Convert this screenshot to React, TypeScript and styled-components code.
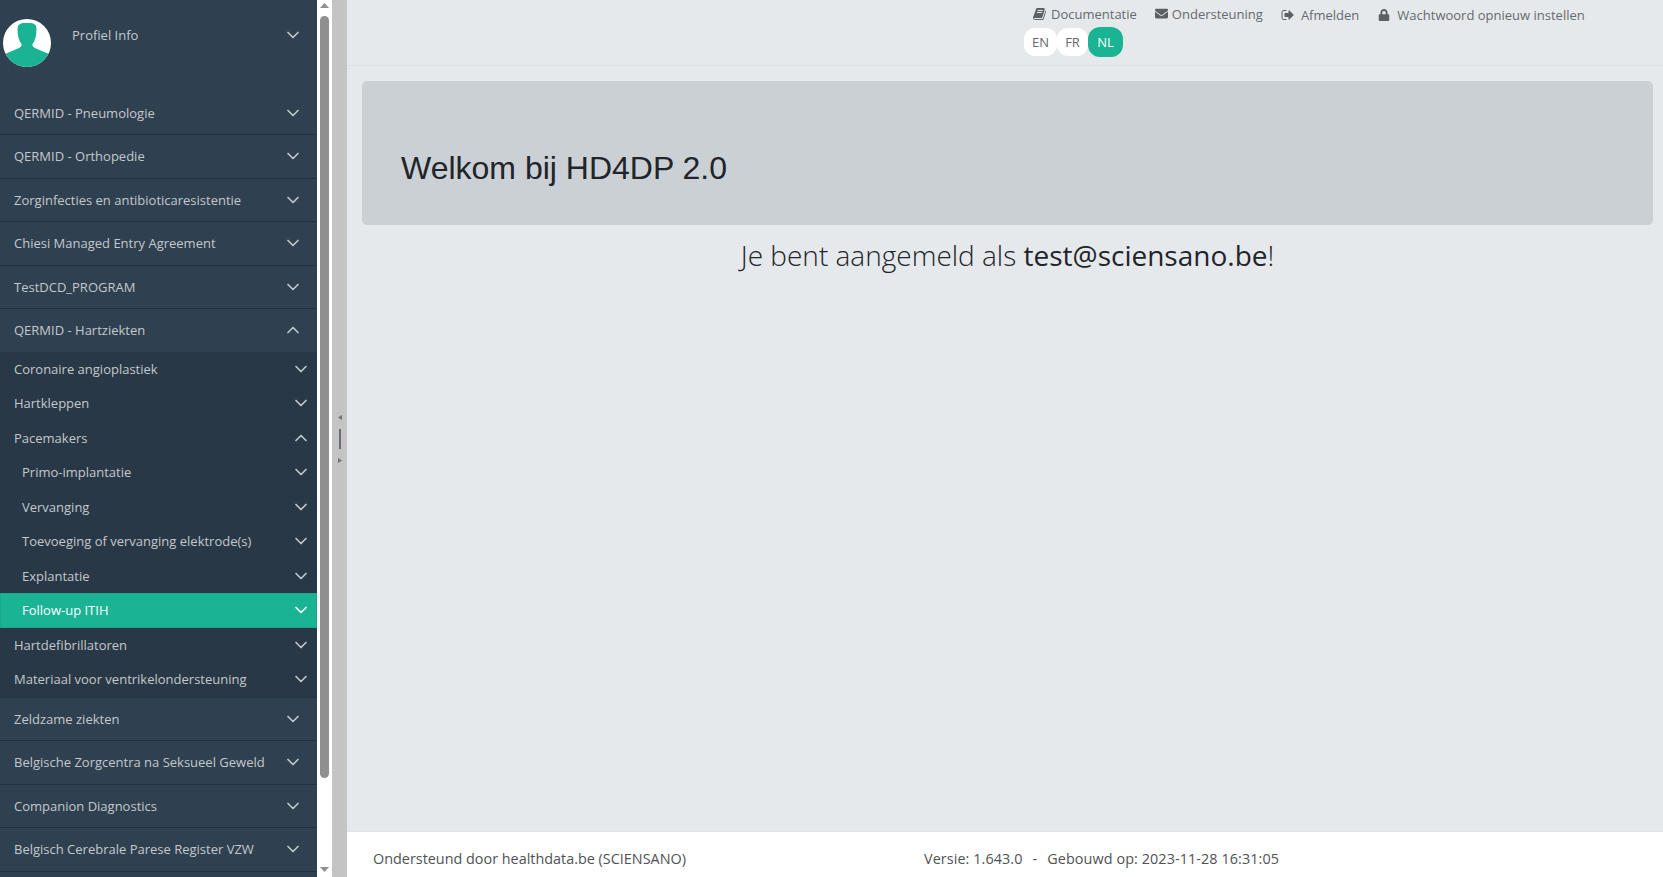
import React from "react";
import styled, { createGlobalStyle } from "styled-components";
import { FaEnvelope, FaLock } from "react-icons/fa";
import { FiChevronDown, FiChevronUp } from "react-icons/fi";

const Global = createGlobalStyle`
  html, body { margin: 0; padding: 0; height: 100%; overflow: hidden; }
  body { font-family: "Open Sans", "Liberation Sans", sans-serif; background: #e5e9ec; }
  * { box-sizing: border-box; }
`;

const Page = styled.div`
  display: flex;
  height: 877px;
  width: 1663px;
  overflow: hidden;
`;

const Sidebar = styled.nav`
  width: 317px;
  flex: none;
  background: #2f4050;
  overflow: hidden;
  color: #c3c8cc;
  font-size: 13px;
`;

const Profile = styled.div`
  height: 91.5px;
  display: flex;
  align-items: flex-start;
  padding: 19px 14px 0 3px;
`;

const Avatar = styled.svg`
  width: 48px;
  height: 48px;
  flex: none;
  border-radius: 50%;
`;

const ProfileLabel = styled.span`
  margin-left: 21px;
  line-height: 32px;
  flex: 1;
`;

const ChevronSlot = styled.span`
  display: flex;
  margin-top: 6px;
`;

const Row = styled.div<{ $height: number; $indent: number; $active?: boolean; $border?: boolean; $right: number }>`
  height: ${(p) => p.$height}px;
  display: flex;
  align-items: center;
  justify-content: space-between;
  padding: 0 ${(p) => p.$right}px 0 ${(p) => p.$indent}px;
  color: ${(p) => (p.$active ? "#ffffff" : "#c3c8cc")};
  background: ${(p) => (p.$active ? "#1ab394" : "transparent")};
  box-shadow: ${(p) => (p.$active ? "inset 0 0 0 1px #18a98b" : "none")};
  border-bottom: ${(p) => (p.$border ? "1px solid #243240" : "none")};
`;

const SubMenu = styled.div`
  background: #293846;
  border-bottom: 1px solid #263340;
`;

const Scrollbar = styled.div`
  width: 15px;
  flex: none;
  background: #ffffff;
  display: flex;
  flex-direction: column;
  align-items: center;
  padding: 3px 3px 5px;
`;

const ScrollArrow = styled.svg`
  width: 9px;
  height: 5px;
  flex: none;
  fill: #8f8f8f;
`;

const ScrollThumb = styled.div`
  width: 9px;
  height: 762px;
  margin-top: 8px;
  background: #8f8f8f;
  border-radius: 5px;
`;

const ScrollSpace = styled.div`
  flex: 1;
`;

const Resizer = styled.div`
  width: 15px;
  flex: none;
  background: #c4c4c4;
  display: flex;
  flex-direction: column;
  align-items: center;
  justify-content: center;
  gap: 9px;
`;

const ResizerHandle = styled.div`
  width: 2px;
  height: 20px;
  background: #666e75;
`;

const Nub = styled.svg`
  width: 4px;
  height: 5px;
  fill: #77736e;
`;

const Main = styled.main`
  flex: 1;
  min-width: 0;
  display: flex;
  flex-direction: column;
`;

const TopBar = styled.header`
  height: 66px;
  flex: none;
  border-bottom: 1px solid #dee2e5;
  display: flex;
  flex-direction: column;
  align-items: flex-start;
  padding-left: 677px;
`;

const Links = styled.div`
  display: flex;
  align-items: center;
  height: 27px;
  padding-left: 9px;
  font-size: 13px;
  color: #676a6c;
  white-space: nowrap;
`;

const TopLink = styled.span<{ $gap: number; $after: number; $low?: boolean }>`
  display: inline-flex;
  align-items: center;
  gap: ${(p) => p.$gap}px;
  margin-right: ${(p) => p.$after}px;
  margin-top: ${(p) => (p.$low ? 2 : 0)}px;
  svg { flex: none; color: #5c6063; }
`;

const Langs = styled.div`
  display: flex;
  align-items: center;
`;

const Lang = styled.span<{ $on?: boolean; $w: number }>`
  width: ${(p) => p.$w}px;
  height: ${(p) => (p.$on ? 30 : 28)}px;
  border-radius: ${(p) => (p.$on ? 12 : 11)}px;
  display: flex;
  align-items: center;
  justify-content: center;
  font-size: 13px;
  background: ${(p) => (p.$on ? "#1ab394" : "#ffffff")};
  color: ${(p) => (p.$on ? "#ffffff" : "#676a6c")};
`;

const Content = styled.section`
  flex: 1;
  padding: 15px 10px 0 15px;
  min-height: 0;
`;

const Jumbotron = styled.div`
  height: 144px;
  background: #cbd0d4;
  border-radius: 5px;
  padding: 0 39px;
  display: flex;
  align-items: center;
`;

const Title = styled.h1`
  margin: 0;
  padding-top: 30px;
  font: 400 32px "Liberation Sans", Arial, sans-serif;
  color: #212529;
`;

const Greeting = styled.p`
  margin: 12px 0 0;
  text-align: center;
  font-family: "Open Sans", sans-serif;
  font-weight: 300;
  font-size: 28px;
  line-height: 36px;
  color: #212529;
`;

const Email = styled.span`
  font-weight: 400;
`;

const Footer = styled.footer`
  height: 46px;
  flex: none;
  background: #ffffff;
  border-top: 1px solid #e0e3e6;
  display: flex;
  align-items: center;
  font-size: 14.4px;
  color: #4f5356;
  padding: 8px 0 0 26px;
`;

const FooterLeft = styled.span`
  width: 551px;
`;

const FooterRight = styled.span`
  letter-spacing: 0.08px;
`;

const FooterDash = styled.span`
  padding: 0 10px;
`;

const BookIcon = () => (
  <svg width="14" height="14" viewBox="0 0 1792 1792" fill="#5c6063">
    <path d="M1639 478q40 57 18 129l-275 906q-19 64-76.500 107.500t-122.500 43.500h-923q-77 0-148.500-53.500t-99.500-131.500q-24-67-2-127 0-4 3-27t4-37q1-8-3-21.500t-3-19.500q2-11 8-21t16.500-23.500 16.500-23.500q23-38 45-91.500t30-91.500q3-10 .5-30t-.5-28q3-11 17-28t17-23q21-36 42-92t25-90q1-9-2.500-32t.5-28q4-13 22-30.500t22-22.500q19-26 42.500-84.500t27.500-96.500q1-8-3-25.500t-2-26.500q2-8 9-18t18-23 17-21q8-12 16.500-30.500t15-35 16-36 19.500-32 26.500-23.500 36-11.500 47.500 5.500l-1 3q38-9 51-9h761q74 0 114 56t18 130l-274 906q-36 119-71.500 153.500t-128.500 34.500h-869q-27 0-38 15-11 16-1 43 24 70 144 70h923q29 0 56-15.500t35-41.500l300-987q7-22 5-57 38 15 59 43zm-1064 2q-4 13 2 22.500t20 9.500h608q13 0 25.500-9.500t16.500-22.500l21-64q4-13-2-22.500t-20-9.500h-608q-13 0-25.500 9.500t-16.500 22.500zm-83 256q-4 13 2 22.500t20 9.500h608q13 0 25.500-9.500t16.500-22.500l21-64q4-13-2-22.500t-20-9.500h-608q-13 0-25.500 9.500t-16.500 22.500z" />
  </svg>
);

const SignOutIcon = () => (
  <svg width="14" height="14" viewBox="0 0 1792 1792" fill="#5c6063">
    <path d="M704 1440q0 4 1 20t.5 26.500-3 23.500-10 19.500-20.500 6.500h-320q-119 0-203.500-84.500t-84.500-203.500v-704q0-119 84.500-203.500t203.500-84.500h320q13 0 22.500 9.500t9.500 22.500q0 4 1 20t.5 26.500-3 23.500-10 19.500-20.500 6.500h-320q-66 0-113 47t-47 113v704q0 66 47 113t113 47h288 11 13t11.500 1 11.500 3 8 5.500 7 9 2 13.500zm928-544q0 26-19 45l-544 544q-19 19-45 19t-45-19-19-45v-288h-448q-26 0-45-19t-19-45v-384q0-26 19-45t45-19h448v-288q0-26 19-45t45-19 45 19l544 544q19 19 19 45z" />
  </svg>
);

const Chevron = ({ up, white }: { up?: boolean; white?: boolean }) =>
  up ? (
    <FiChevronUp size={20} strokeWidth={2} color={white ? "#fff" : "#c3c8cc"} />
  ) : (
    <FiChevronDown size={20} strokeWidth={2} color={white ? "#fff" : "#c3c8cc"} />
  );

const topBefore = [
  "QERMID - Pneumologie",
  "QERMID - Orthopedie",
  "Zorginfecties en antibioticaresistentie",
  "Chiesi Managed Entry Agreement",
  "TestDCD_PROGRAM",
];
const topAfter = [
  "Zeldzame ziekten",
  "Belgische Zorgcentra na Seksueel Geweld",
  "Companion Diagnostics",
  "Belgisch Cerebrale Parese Register VZW",
];
const subRows: { label: string; indent: number; up?: boolean; active?: boolean }[] = [
  { label: "Coronaire angioplastiek", indent: 14 },
  { label: "Hartkleppen", indent: 14 },
  { label: "Pacemakers", indent: 14, up: true },
  { label: "Primo-implantatie", indent: 22 },
  { label: "Vervanging", indent: 22 },
  { label: "Toevoeging of vervanging elektrode(s)", indent: 22 },
  { label: "Explantatie", indent: 22 },
  { label: "Follow-up ITIH", indent: 22, active: true },
  { label: "Hartdefibrillatoren", indent: 14 },
  { label: "Materiaal voor ventrikelondersteuning", indent: 14 },
];

export default function App() {
  return (
    <Page>
      <Global />
      <Sidebar>
        <Profile>
          <Avatar viewBox="0 0 48 48">
            <rect width="48" height="48" fill="#ffffff" />
            <path
              fill="#1ab394"
              d="M14.500 10C14.500 4 19 4 24 4C29 4 33.500 4 33.500 10C33.500 17 32 22 29.500 25C29 27 30 28 33 29.500L46 35V48H2V35L15 29.500C18 28 19 27 18.500 25C16 22 14.500 17 14.500 10Z"
            />
          </Avatar>
          <ProfileLabel>Profiel Info</ProfileLabel>
          <ChevronSlot><Chevron /></ChevronSlot>
        </Profile>
        {topBefore.map((label) => (
          <Row key={label} $height={43.5} $indent={14} $right={14} $border>
            {label}
            <Chevron />
          </Row>
        ))}
        <Row $height={42.5} $indent={14} $right={14}>
          QERMID - Hartziekten
          <Chevron up />
        </Row>
        <SubMenu>
          {subRows.map((r) => (
            <Row key={r.label} $height={34.5} $indent={r.indent} $right={6} $active={r.active}>
              {r.label}
              <Chevron up={r.up} white={r.active} />
            </Row>
          ))}
        </SubMenu>
        {topAfter.map((label) => (
          <Row key={label} $height={43.5} $indent={14} $right={14} $border>
            {label}
            <Chevron />
          </Row>
        ))}
      </Sidebar>
      <Scrollbar>
        <ScrollArrow viewBox="0 0 9 5"><path d="M4.500 0 9 5H0z" /></ScrollArrow>
        <ScrollThumb />
        <ScrollSpace />
        <ScrollArrow viewBox="0 0 9 5"><path d="M0 0h9L4.500 5z" /></ScrollArrow>
      </Scrollbar>
      <Resizer>
        <Nub viewBox="0 0 4 5"><path d="M4 0v5L0 2.500z" /></Nub>
        <ResizerHandle />
        <Nub viewBox="0 0 4 5"><path d="M0 0v5l4-2.500z" /></Nub>
      </Resizer>
      <Main>
        <TopBar>
          <Links>
            <TopLink $gap={4} $after={18}><BookIcon />Documentatie</TopLink>
            <TopLink $gap={4} $after={18}><FaEnvelope size={13} />Ondersteuning</TopLink>
            <TopLink $gap={6} $after={19} $low><SignOutIcon />Afmelden</TopLink>
            <TopLink $gap={7} $after={0} $low><FaLock size={12} />Wachtwoord opnieuw instellen</TopLink>
          </Links>
          <Langs>
            <Lang $w={33}>EN</Lang>
            <Lang $w={31}>FR</Lang>
            <Lang $w={35} $on>NL</Lang>
          </Langs>
        </TopBar>
        <Content>
          <Jumbotron>
            <Title>Welkom bij HD4DP 2.0</Title>
          </Jumbotron>
          <Greeting>
            Je bent aangemeld als <Email>test@sciensano.be</Email>!
          </Greeting>
        </Content>
        <Footer>
          <FooterLeft>Ondersteund door healthdata.be (SCIENSANO)</FooterLeft>
          <FooterRight>
            Versie: 1.643.0<FooterDash>-</FooterDash>Gebouwd op: 2023-11-28 16:31:05
          </FooterRight>
        </Footer>
      </Main>
    </Page>
  );
}
